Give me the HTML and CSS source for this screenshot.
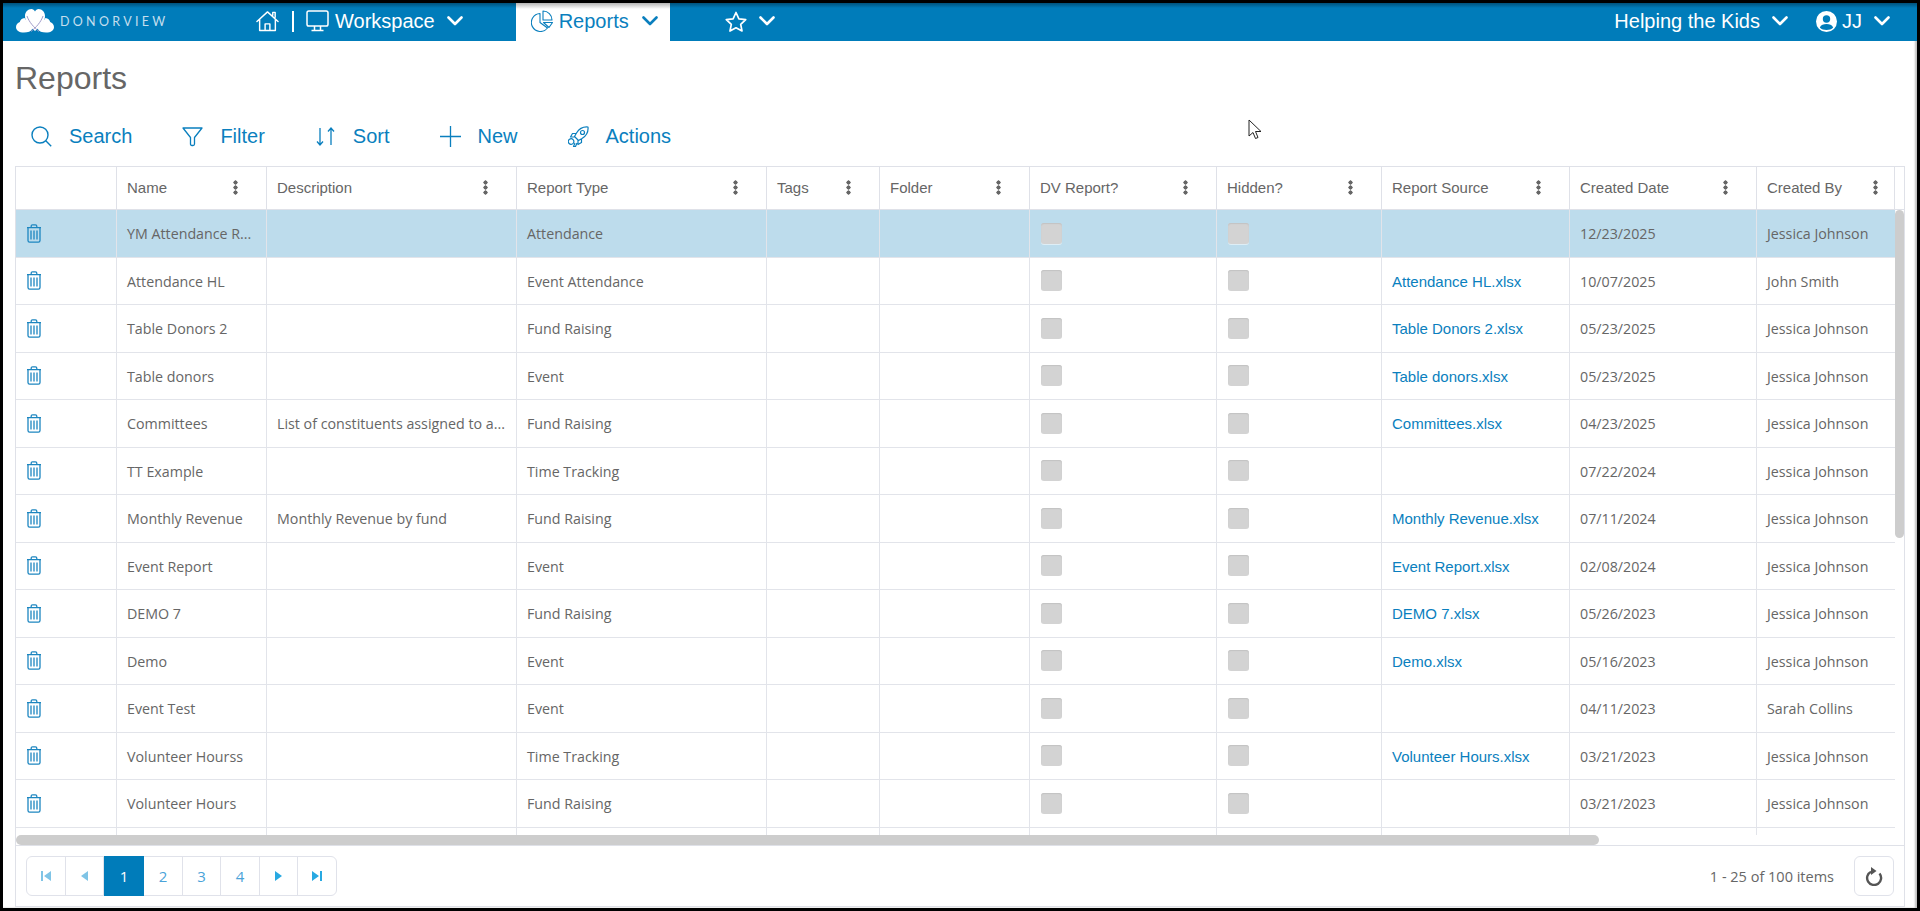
FILE: index.html
```html
<!DOCTYPE html>
<html lang="en">
<head>
<meta charset="utf-8">
<title>Reports</title>
<link rel="stylesheet" href="styles.css">
</head>
<body>
<svg class="defs" width="0" height="0" aria-hidden="true">
  <symbol id="chev" viewBox="0 0 16 10"><path d="M1.5 1.5 8 8l6.5-6.5" fill="none" stroke="currentColor" stroke-width="2.6" stroke-linecap="round" stroke-linejoin="round"/></symbol>
  <symbol id="trash" viewBox="0 0 16 19"><path d="M1 3.6h14M5.2 3.4V2.2Q5.2 .8 6.6 .8h2.8q1.4 0 1.4 1.4v1.2M2 4v12.6q0 1.6 1.6 1.6h8.8q1.6 0 1.6-1.6V4M5 6.5v9M8 6.5v9M11 6.5v9" fill="none" stroke="currentColor" stroke-width="1.3"/></symbol>
</svg>
<div class="frame">
  <header class="nav">
    <div class="brand">
      <svg class="logo" viewBox="0 0 38 24"><path fill="#fff" d="M19 22C13 17.500 9 13 9 7 9 3 12 0 15.300 0 17 0 18.300 .9 19 2.600 19.700 .9 21 0 22.700 0 26 0 29 3 29 7 29 13 25 17.500 19 22Z"/><path fill="#fff" d="M8.500 9C10.500 12 14 17 16.500 19.500 15 22.500 12 23.500 8 23.500 3 23.500 0 21.500 0 18 0 15.500 2 13.800 3.800 13 4.300 11 6 9.300 8.500 9Z"/><path fill="#fff" d="M29.500 9C27.500 12 24 17 21.500 19.500 23 22.500 26 23.500 30 23.500 35 23.500 38 21.500 38 18 38 15.500 36 13.800 34.200 13 33.700 11 32 9.300 29.500 9Z"/><path fill="none" stroke="#9f9ac9" stroke-width="1" d="M11 7C13 13 18 18.500 23 22.500M27 7C25 13 20 18.500 15 22.500"/></svg>
      <span class="brand-text">DONORVIEW</span>
    </div>
    <svg class="home" viewBox="0 0 24 22"><path d="M1 11.500 12 1.500l11 10M3.800 9.500V21h16.400V9.500M9.500 21v-7h5v7M17.500 5V2h2.500v5.200" fill="none" stroke="currentColor" stroke-width="1.500" stroke-linejoin="round" stroke-linecap="round"/></svg>
    <span class="sep"></span>
    <svg class="monitor" viewBox="0 0 23 22"><path d="M2.800 1h17.400Q22 1 22 2.800v11.400q0 1.800-1.800 1.800H2.800Q1 16 1 14.200V2.800Q1 1 2.800 1ZM8.500 16v4M14.500 16v4M5.500 20.500h12" fill="none" stroke="currentColor" stroke-width="1.500"/></svg>
    <span class="nav-label workspace">Workspace</span>
    <svg class="chev" viewBox="0 0 16 10"><use href="#chev"/></svg>
    <div class="tab">
      <svg class="pie" viewBox="0 0 22 22"><path d="M9 3.500A9 9 0 1 0 16.500 18L9 12.500ZM12 1v9h9A9 9 0 0 0 12 1ZM12.500 12.500l5.500 5 3.500-5Z" fill="none" stroke="currentColor" stroke-width="1.100" stroke-linejoin="round"/></svg>
      <span class="nav-label">Reports</span>
      <svg class="chev" viewBox="0 0 16 10"><use href="#chev"/></svg>
    </div>
    <svg class="star" viewBox="0 0 22 21"><path d="m11 1.500 2.900 6.300 6.800.8-5 4.700 1.300 6.700L11 16.800l-6 3.200 1.300-6.700-5-4.700 6.800-.8Z" fill="none" stroke="currentColor" stroke-width="1.700" stroke-linejoin="round"/></svg>
    <svg class="chev star-chev" viewBox="0 0 16 10"><use href="#chev"/></svg>
    <div class="nav-right">
      <span class="nav-label">Helping the Kids</span>
      <svg class="chev" viewBox="0 0 16 10"><use href="#chev"/></svg>
      <svg class="user" viewBox="0 0 21 21"><circle cx="10.500" cy="10.500" r="10.500" fill="#fff"/><circle cx="10.500" cy="8" r="3.700" fill="#007cba"/><path d="M3.800 16.500C5 13.800 7.500 13 10.500 13s5.500.8 6.700 3.500C15.500 18.300 13 19 10.500 19s-5-.7-6.700-2.500Z" fill="#007cba"/></svg>
      <span class="nav-label jj">JJ</span>
      <svg class="chev" viewBox="0 0 16 10"><use href="#chev"/></svg>
    </div>
  </header>

  <main class="page">
    <h1 class="title">Reports</h1>
    <div class="toolbar">
      <a class="tool"><svg class="tool-ic" viewBox="0 0 21 21"><circle cx="9" cy="9" r="8" fill="none" stroke="currentColor" stroke-width="1.400"/><path d="m14.800 14.800 5.400 5.400" stroke="currentColor" stroke-width="1.400"/></svg>Search</a>
      <a class="tool"><svg class="tool-ic" viewBox="0 0 21 21"><path d="M1 2h19l-7.500 9.500V18q0 1.500-1.500 1.500h-1q-1.500 0-1.500-1.500v-6.500Z" fill="none" stroke="currentColor" stroke-width="1.300" stroke-linejoin="round"/></svg>Filter</a>
      <a class="tool"><svg class="tool-ic" viewBox="0 0 21 21"><path d="M5 2v17M2 15.500 5 19l3-3.500M16 19V2M13 5.500 16 2l3 3.500" fill="none" stroke="currentColor" stroke-width="1.300"/></svg>Sort</a>
      <a class="tool"><svg class="tool-ic" viewBox="0 0 21 21"><path d="M10.500 0v21M0 10.500h21" stroke="currentColor" stroke-width="1.300"/></svg>New</a>
      <a class="tool"><svg class="tool-ic" viewBox="0 0 21 21"><path d="M20 1c-5-.5-9 2-11.500 6l-2 3.500 4 4 3.500-2C18 10 20.500 6 20 1ZM8.300 7.500H4.500L2.500 11h4M13.500 12.700v3.800L10 18.500v-4M5 13.500a2.800 2.800 0 1 0 .1.100ZM9 17l-1.500 3.500h-2L7 17" fill="none" stroke="currentColor" stroke-width="1.200" stroke-linejoin="round"/><circle cx="14.500" cy="6.500" r="2" fill="none" stroke="currentColor" stroke-width="1.200"/></svg>Actions</a>
    </div>

    <section class="grid">
      <div class="grid-head">
        <div class="cols">
          <div class="th"></div>
          <div class="th"><span>Name</span><i class="kebab"></i></div>
          <div class="th"><span>Description</span><i class="kebab"></i></div>
          <div class="th"><span>Report Type</span><i class="kebab"></i></div>
          <div class="th"><span>Tags</span><i class="kebab"></i></div>
          <div class="th"><span>Folder</span><i class="kebab"></i></div>
          <div class="th"><span>DV Report?</span><i class="kebab"></i></div>
          <div class="th"><span>Hidden?</span><i class="kebab"></i></div>
          <div class="th"><span>Report Source</span><i class="kebab"></i></div>
          <div class="th"><span>Created Date</span><i class="kebab"></i></div>
          <div class="th last"><span>Created By</span><i class="kebab"></i></div>
        </div>
      </div>
      <div class="grid-main">
        <div class="rows">
          <div class="cols row selected"><div class="td"><svg class="del"><use href="#trash"/></svg></div><div class="td"><span>YM Attendance R...</span></div><div class="td"></div><div class="td"><span>Attendance</span></div><div class="td"></div><div class="td"></div><div class="td"><b class="cb"></b></div><div class="td"><b class="cb"></b></div><div class="td"></div><div class="td"><span>12/23/2025</span></div><div class="td"><span>Jessica Johnson</span></div></div>
          <div class="cols row"><div class="td"><svg class="del"><use href="#trash"/></svg></div><div class="td"><span>Attendance HL</span></div><div class="td"></div><div class="td"><span>Event Attendance</span></div><div class="td"></div><div class="td"></div><div class="td"><b class="cb"></b></div><div class="td"><b class="cb"></b></div><div class="td"><a class="link">Attendance HL.xlsx</a></div><div class="td"><span>10/07/2025</span></div><div class="td"><span>John Smith</span></div></div>
          <div class="cols row"><div class="td"><svg class="del"><use href="#trash"/></svg></div><div class="td"><span>Table Donors 2</span></div><div class="td"></div><div class="td"><span>Fund Raising</span></div><div class="td"></div><div class="td"></div><div class="td"><b class="cb"></b></div><div class="td"><b class="cb"></b></div><div class="td"><a class="link">Table Donors 2.xlsx</a></div><div class="td"><span>05/23/2025</span></div><div class="td"><span>Jessica Johnson</span></div></div>
          <div class="cols row"><div class="td"><svg class="del"><use href="#trash"/></svg></div><div class="td"><span>Table donors</span></div><div class="td"></div><div class="td"><span>Event</span></div><div class="td"></div><div class="td"></div><div class="td"><b class="cb"></b></div><div class="td"><b class="cb"></b></div><div class="td"><a class="link">Table donors.xlsx</a></div><div class="td"><span>05/23/2025</span></div><div class="td"><span>Jessica Johnson</span></div></div>
          <div class="cols row"><div class="td"><svg class="del"><use href="#trash"/></svg></div><div class="td"><span>Committees</span></div><div class="td"><span>List of constituents assigned to a...</span></div><div class="td"><span>Fund Raising</span></div><div class="td"></div><div class="td"></div><div class="td"><b class="cb"></b></div><div class="td"><b class="cb"></b></div><div class="td"><a class="link">Committees.xlsx</a></div><div class="td"><span>04/23/2025</span></div><div class="td"><span>Jessica Johnson</span></div></div>
          <div class="cols row"><div class="td"><svg class="del"><use href="#trash"/></svg></div><div class="td"><span>TT Example</span></div><div class="td"></div><div class="td"><span>Time Tracking</span></div><div class="td"></div><div class="td"></div><div class="td"><b class="cb"></b></div><div class="td"><b class="cb"></b></div><div class="td"></div><div class="td"><span>07/22/2024</span></div><div class="td"><span>Jessica Johnson</span></div></div>
          <div class="cols row"><div class="td"><svg class="del"><use href="#trash"/></svg></div><div class="td"><span>Monthly Revenue</span></div><div class="td"><span>Monthly Revenue by fund</span></div><div class="td"><span>Fund Raising</span></div><div class="td"></div><div class="td"></div><div class="td"><b class="cb"></b></div><div class="td"><b class="cb"></b></div><div class="td"><a class="link">Monthly Revenue.xlsx</a></div><div class="td"><span>07/11/2024</span></div><div class="td"><span>Jessica Johnson</span></div></div>
          <div class="cols row"><div class="td"><svg class="del"><use href="#trash"/></svg></div><div class="td"><span>Event Report</span></div><div class="td"></div><div class="td"><span>Event</span></div><div class="td"></div><div class="td"></div><div class="td"><b class="cb"></b></div><div class="td"><b class="cb"></b></div><div class="td"><a class="link">Event Report.xlsx</a></div><div class="td"><span>02/08/2024</span></div><div class="td"><span>Jessica Johnson</span></div></div>
          <div class="cols row"><div class="td"><svg class="del"><use href="#trash"/></svg></div><div class="td"><span>DEMO 7</span></div><div class="td"></div><div class="td"><span>Fund Raising</span></div><div class="td"></div><div class="td"></div><div class="td"><b class="cb"></b></div><div class="td"><b class="cb"></b></div><div class="td"><a class="link">DEMO 7.xlsx</a></div><div class="td"><span>05/26/2023</span></div><div class="td"><span>Jessica Johnson</span></div></div>
          <div class="cols row"><div class="td"><svg class="del"><use href="#trash"/></svg></div><div class="td"><span>Demo</span></div><div class="td"></div><div class="td"><span>Event</span></div><div class="td"></div><div class="td"></div><div class="td"><b class="cb"></b></div><div class="td"><b class="cb"></b></div><div class="td"><a class="link">Demo.xlsx</a></div><div class="td"><span>05/16/2023</span></div><div class="td"><span>Jessica Johnson</span></div></div>
          <div class="cols row"><div class="td"><svg class="del"><use href="#trash"/></svg></div><div class="td"><span>Event Test</span></div><div class="td"></div><div class="td"><span>Event</span></div><div class="td"></div><div class="td"></div><div class="td"><b class="cb"></b></div><div class="td"><b class="cb"></b></div><div class="td"></div><div class="td"><span>04/11/2023</span></div><div class="td"><span>Sarah Collins</span></div></div>
          <div class="cols row"><div class="td"><svg class="del"><use href="#trash"/></svg></div><div class="td"><span>Volunteer Hourss</span></div><div class="td"></div><div class="td"><span>Time Tracking</span></div><div class="td"></div><div class="td"></div><div class="td"><b class="cb"></b></div><div class="td"><b class="cb"></b></div><div class="td"><a class="link">Volunteer Hours.xlsx</a></div><div class="td"><span>03/21/2023</span></div><div class="td"><span>Jessica Johnson</span></div></div>
          <div class="cols row"><div class="td"><svg class="del"><use href="#trash"/></svg></div><div class="td"><span>Volunteer Hours</span></div><div class="td"></div><div class="td"><span>Fund Raising</span></div><div class="td"></div><div class="td"></div><div class="td"><b class="cb"></b></div><div class="td"><b class="cb"></b></div><div class="td"></div><div class="td"><span>03/21/2023</span></div><div class="td"><span>Jessica Johnson</span></div></div>
          <div class="cols row"><div class="td"></div><div class="td"></div><div class="td"></div><div class="td"></div><div class="td"></div><div class="td"></div><div class="td"></div><div class="td"></div><div class="td"></div><div class="td"></div><div class="td"></div></div>
        </div>
        <div class="vscroll"><div class="vthumb"></div></div>
      </div>
      <div class="hscroll"><div class="hthumb"></div></div>
      <footer class="pager-bar">
        <nav class="pager">
          <a class="pg dim"><svg class="pg-ic" viewBox="0 0 10 12"><path d="M0 1h2v10H0ZM10 1v10L3 6Z"/></svg></a>
          <a class="pg dim"><svg class="pg-ic" viewBox="0 0 10 12"><path d="M9 1v10L2 6Z"/></svg></a>
          <a class="pg active">1</a>
          <a class="pg">2</a>
          <a class="pg">3</a>
          <a class="pg">4</a>
          <a class="pg bright"><svg class="pg-ic" viewBox="0 0 10 12"><path d="M1 1v10l7-5Z"/></svg></a>
          <a class="pg bright"><svg class="pg-ic" viewBox="0 0 10 12"><path d="M0 1v10l7-5ZM8 1h2v10H8Z"/></svg></a>
        </nav>
        <span class="count">1 - 25 of 100 items</span>
        <a class="refresh"><svg viewBox="0 0 18 20" width="18" height="20"><path d="M14.500 7.500A7 7 0 1 1 6 5.700" fill="none" stroke="#555" stroke-width="2.400"/><path d="M6 1v8l5.500-4Z" fill="#555"/></svg></a>
      </footer>
    </section>
  </main>
  <svg class="cursor" viewBox="0 0 13 21"><path d="M1 1v16l4-3.500 2.500 6 2.500-1-2.500-6H13Z" fill="#fff" stroke="#222" stroke-width="1"/></svg>
</div>
</body>
</html>
```
FILE: styles.css
```css
* { box-sizing: border-box; }
html, body { margin: 0; padding: 0; background: #000; }
body { font-family: "Liberation Sans", Arial, sans-serif; color: #666; overflow: hidden; }
.defs { position: absolute; }
.frame {
  position: relative;
  width: 1920px;
  height: 911px;
  border: 3px solid #000;
  background: #fff;
  display: flex;
  flex-direction: column;
  box-shadow: inset -2px 0 2px rgba(0,0,0,.25);
}

/* top bar */
.nav {
  height: 38px;
  flex: none;
  display: flex;
  align-items: center;
  background: linear-gradient(#00527c 0, #007cba 5px);
  color: #fff;
  padding: 0 0 2px 13px;
}
.brand { display: flex; align-items: center; gap: 6px; width: 240px; }
.logo { width: 38px; height: 24px; flex: none; }
.brand-text {
  font-family: Lato, "Open Sans", sans-serif;
  font-size: 12.500px;
  letter-spacing: 3.300px;
  color: #c4dfee;
  white-space: nowrap;
}
.home { width: 23px; height: 22px; flex: none; }
.sep { width: 2px; height: 21px; background: #fff; margin: 0 12px 0 13px; flex: none; }
.monitor { width: 23px; height: 22px; flex: none; margin-right: 6px; }
.nav-label { font-size: 20px; white-space: nowrap; }
.chev { width: 16px; height: 10px; flex: none; }
.workspace { margin-right: 12px; }
.tab {
  margin-left: 53px;
  width: 154px;
  height: 38px;
  padding: 0 0 2px 15px;
  align-self: flex-start;
  display: flex;
  align-items: center;
  color: #0a7fbe;
  background: linear-gradient(#b5b5b5 0, #fff 6px);
}
.pie { width: 22px; height: 22px; flex: none; margin-right: 6px; }
.tab .nav-label { margin-right: 13px; }
.star { width: 22px; height: 21px; margin-left: 55px; flex: none; }
.star-chev { margin-left: 12px; }
.nav-right { margin-left: auto; padding-right: 27px; display: flex; align-items: center; }
.nav-right .nav-label { margin-right: 12px; }
.user { width: 21px; height: 21px; margin-left: 28px; margin-right: 5px; flex: none; }

/* page */
.page { flex: 1; min-height: 0; display: flex; flex-direction: column; padding: 0 12px 1px; }
.title { margin: 17px 0 8px; font-size: 32px; line-height: 40px; font-weight: 400; color: #666; }
.toolbar { height: 60px; flex: none; display: flex; align-items: center; gap: 50px; padding-left: 16px; }
.tool { display: flex; align-items: center; gap: 17px; font-size: 20px; color: #0a7fbe; }
.tool-ic { width: 21px; height: 21px; flex: none; }

/* grid */
.grid { flex: 1; min-height: 0; display: flex; flex-direction: column; border: 1px solid #dfe1e8; }
.cols { display: grid; grid-template-columns: 101px 150px 250px 250px 113px 150px 187px 165px 188px 187px 138px; }
.grid-head { height: 43px; flex: none; border-bottom: 1px solid #dfe1e8; }
.th {
  height: 42px;
  display: flex;
  align-items: center;
  justify-content: space-between;
  padding: 0 28px 2px 10px;
  border-right: 1px solid #dfe1e8;
  font-size: 15px;
  color: #666;
  white-space: nowrap;
}
.th.last { padding-right: 16px; }
.kebab {
  width: 5px;
  height: 15px;
  flex: none;
  background: radial-gradient(circle, #666 1.900px, transparent 2.300px) 0 0 / 5px 5px repeat-y;
}
.grid-main { height: 625px; flex: none; display: flex; }
.rows { flex: none; width: 1879px; height: 625px; overflow: hidden; }
.row { height: 47.500px; border-bottom: 1px solid #e2e4ea; }
.row.selected { background: #bddcec; }
.td {
  min-width: 0;
  display: flex;
  align-items: center;
  padding: 0 10px;
  border-right: 1px solid #e2e4ea;
  font-family: "Open Sans", sans-serif;
  font-size: 14.250px;
  color: #666;
}
.td:last-child { border-right: 0; }
.td span { padding-top: 1px; white-space: nowrap; }
.del { width: 16px; height: 19px; color: #1d86c0; }
.cb {
  width: 21px;
  height: 21px;
  flex: none;
  margin-left: 1px;
  border-radius: 3px;
  background: #d3d3d3;
  box-shadow: inset 0 1px 1px #c2c2c2, 0 1px 0 rgba(255,255,255,.5);
}
.link { padding-top: 1px; font-family: "Liberation Sans", Arial, sans-serif; font-size: 15px; color: #0a7fbe; white-space: nowrap; }
.vscroll { flex: 1; }
.vthumb { width: 9px; height: 328px; border-radius: 5px; background: #cdcdcd; }
.hscroll { height: 10px; flex: none; }
.hthumb { width: 1583px; height: 10px; border-radius: 5px; background: #cdcdcd; }
.pager-bar {
  flex: 1;
  display: flex;
  align-items: center;
  padding: 0 10px;
  border-top: 1px solid #dfe1e8;
  font-family: "Open Sans", sans-serif;
}
.pager { display: flex; height: 40px; width: 311px; border: 1px solid #e0e2ea; border-radius: 6px; }
.pg {
  flex: 1;
  display: flex;
  align-items: center;
  justify-content: center;
  font-size: 15px;
  color: #4aa3d9;
  border-right: 1px solid #e0e2ea;
  margin: -1px 0;
}
.pg:last-child { border-right: 0; }
.pg.active { flex: 0 0 40px; background: #007cba; color: #fff; border-right: 0; }
.pg.dim { color: #7fc4e6; }
.pg.bright { color: #28a9e2; }
.pg-ic { width: 10px; height: 12px; fill: currentColor; }
.count { margin-left: auto; margin-right: 20px; font-size: 14.500px; color: #666; }
.refresh {
  width: 40px;
  height: 40px;
  display: flex;
  align-items: center;
  justify-content: center;
  border: 1px solid #e0e2ea;
  border-radius: 6px;
}
.cursor { position: absolute; left: 1245px; top: 116px; width: 13px; height: 21px; }
```
